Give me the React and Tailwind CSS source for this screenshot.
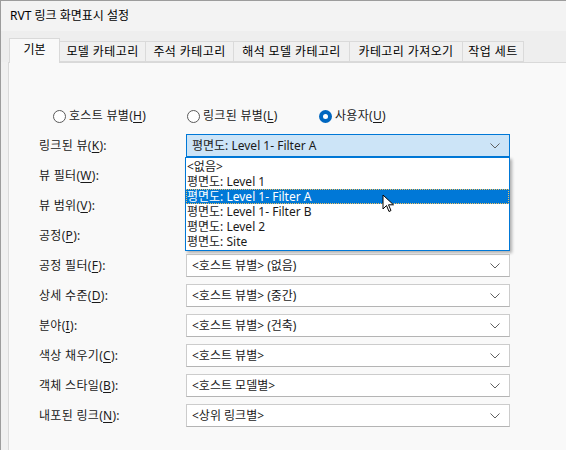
import React from 'react';

const font = { fontFamily: '"Noto Sans", "Noto Sans CJK KR", sans-serif' };

const Mn = ({ k }) => (
  <span>
    (<span className="underline underline-offset-2">{k}</span>)
  </span>
);

const Chevron = ({ color = '#606060' }) => (
  <svg width="10" height="6" viewBox="0 0 10 6" fill="none">
    <path d="M0.5 0.5 L5 5 L9.5 0.5" stroke={color} strokeWidth="1" />
  </svg>
);

const Radio = ({ checked, label, k }) => (
  <div className="flex items-center gap-[3px]">
    {checked ? (
      <span className="w-[13px] h-[13px] rounded-full bg-[#0067c0] flex items-center justify-center">
        <span className="w-[5px] h-[5px] rounded-full bg-white" />
      </span>
    ) : (
      <span className="w-[13px] h-[13px] rounded-full border border-[#5a5a5a] bg-white" />
    )}
    <span className="tracking-[0.3px]">
      {label}
      <Mn k={k} />
    </span>
  </div>
);

const Select = ({ value, active }) => (
  <div
    className={`w-[324px] h-[23px] flex items-center justify-between pl-[5px] pr-[9px] border ${
      active ? 'bg-[#cce4f7] border-[#0078d7]' : 'bg-white border-[#cccccc] border-b-[#b4b4b4]'
    }`}
  >
    <span>{value}</span>
    <Chevron />
  </div>
);

const rows = [
  { label: '링크된 뷰', k: 'K', value: '평면도: Level 1- Filter A', active: true },
  { label: '뷰 필터', k: 'W', value: '' },
  { label: '뷰 범위', k: 'V', value: '' },
  { label: '공정', k: 'P', value: '' },
  { label: '공정 필터', k: 'F', value: '<호스트 뷰별> (없음)' },
  { label: '상세 수준', k: 'D', value: '<호스트 뷰별> (중간)' },
  { label: '분야', k: 'I', value: '<호스트 뷰별> (건축)' },
  { label: '색상 채우기', k: 'C', value: '<호스트 뷰별>' },
  { label: '객체 스타일', k: 'B', value: '<호스트 모델별>' },
  { label: '내포된 링크', k: 'N', value: '<상위 링크별>' },
];

const tabs = [
  { t: '모델 카테고리', w: 'w-[86px]' },
  { t: '주석 카테고리', w: 'w-[88px]' },
  { t: '해석 모델 카테고리', w: 'w-[116px]' },
  { t: '카테고리 가져오기', w: 'w-[113px]' },
  { t: '작업 세트', w: 'w-[61px]' },
];

const options = [
  '<없음>',
  '평면도: Level 1',
  '평면도: Level 1- Filter A',
  '평면도: Level 1- Filter B',
  '평면도: Level 2',
  '평면도: Site',
];

export default function App() {
  return (
    <div
      className="relative w-[566px] h-[450px] overflow-hidden bg-[#f0f0f0] border-t border-l border-[#9c9c9c] text-[12px] text-[#1a1a1a] flex flex-col"
      style={font}
    >
      {/* Title */}
      <div className="h-[30px] bg-[#f3f3f3] flex items-center pl-[9px] text-[12px] text-black">
        RVT 링크 화면표시 설정
      </div>

      {/* Tabs */}
      <div className="flex items-end pl-[8px] h-[31px] bg-[#eeeeee]">
        <div className="h-[25px] w-[51px] bg-[#f9f9f9] border border-b-0 border-[#d9d9d9] flex items-center justify-center pb-[2px] relative z-10 -mb-px text-black">
          기본
        </div>
        {tabs.map(({ t, w }) => (
          <div
            key={t}
            className={`h-[21px] ${w} bg-[#f0f0f0] border border-l-0 border-[#dadada] flex items-center justify-center tracking-[0.4px] text-black`}
          >
            {t}
          </div>
        ))}
      </div>

      {/* Panel */}
      <div className="flex-1 ml-[7px] bg-[#f9f9f9] border-t border-l border-[#d9d9d9] pl-[30px] pt-[45px]">
        <div className="flex items-center h-[16px] pl-[14px]">
          <div className="w-[134px]">
            <Radio label="호스트 뷰별" k="H" />
          </div>
          <div className="w-[132px]">
            <Radio label="링크된 뷰별" k="L" />
          </div>
          <Radio checked label="사용자" k="U" />
        </div>

        <div className="mt-[10px] flex flex-col gap-[7px]">
          {rows.map((r) => (
            <div key={r.label} className="flex items-center">
              <div className="w-[147px] tracking-[0.3px]">
                {r.label}
                <Mn k={r.k} />:
              </div>
              <Select value={r.value} active={r.active} />
            </div>
          ))}
        </div>
      </div>

      {/* Dropdown list */}
      <div className="absolute left-[184px] top-[156px] w-[325px] bg-white border border-[#0078d7] shadow-[2px_2px_3px_rgba(0,0,0,0.3)] py-[1px] z-20">
        {options.map((o, i) => (
          <div
            key={o}
            className={`h-[15px] leading-[15px] pl-[1px] overflow-hidden ${
              i === 2 ? 'bg-[#0078d7] text-white outline outline-1 outline-dotted outline-[#f0c060] -outline-offset-1' : ''
            }`}
          >
            {o}
          </div>
        ))}
      </div>

      {/* Cursor */}
      <svg className="absolute left-[381px] top-[193px] z-30" width="14" height="20" viewBox="0 0 14 20">
        <path d="M1 1 L1 15 L4.5 11.5 L7 17.5 L9 16.5 L6.5 10.8 L11.5 10.8 Z" fill="white" stroke="black" strokeWidth="1" strokeLinejoin="round" />
      </svg>
    </div>
  );
}
